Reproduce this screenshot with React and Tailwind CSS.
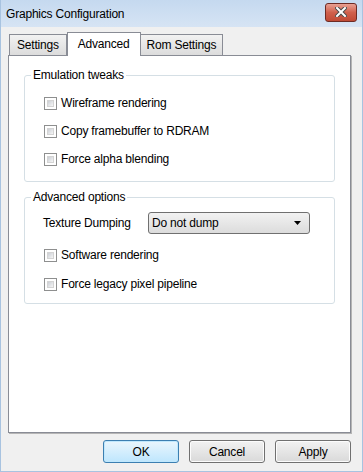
import React from "react";

const font = { fontFamily: '"Liberation Sans", Arial, sans-serif', letterSpacing: "-0.2px" };

function Check({ label }) {
  return (
    <label className="flex items-center gap-[4px] h-[14px] text-[12px] text-black">
      <span className="w-[13px] h-[13px] border border-[#8e8f8f] bg-white p-[2px] shrink-0">
        <span className="block w-full h-full bg-gradient-to-br from-[#cbcfd5] to-[#f6f6f6] border border-[#d4d4d4]" />
      </span>
      {label}
    </label>
  );
}

function Group({ title, className, children }) {
  return (
    <div className={`relative border border-[#d5dfe5] rounded-[3px] ${className}`}>
      <span className="absolute -top-[8px] left-[6px] bg-white px-[2px] text-[12px] leading-[14px] text-black">
        {title}
      </span>
      {children}
    </div>
  );
}

function Button({ children, primary }) {
  return (
    <button
      className={`w-[76px] h-[23px] rounded-[3px] border text-[12px] text-black ${
        primary
          ? "border-[#3c7fb1] bg-gradient-to-b from-[#eaf6fd] to-[#bee6fd] shadow-[inset_0_0_0_1px_#c0e8fd]"
          : "border-[#707070] bg-gradient-to-b from-[#f2f2f2] to-[#d9d9d9] shadow-[inset_0_0_0_1px_#fcfcfc]"
      }`}
    >
      {children}
    </button>
  );
}

export default function App() {
  return (
    <div style={font} className="w-[363px] h-[472px] flex flex-col bg-[#f0f0f0] border-x border-b border-[#a8c3e0] overflow-hidden">
      {/* Title bar */}
      <div className="h-[27px] shrink-0 flex items-center justify-between pl-[5px] pr-[5px] bg-gradient-to-b from-[#c5d9ef] to-[#d6e4f4]">
        <span className="text-[12px] text-black mt-[1px]">Graphics Configuration</span>
        <div className="w-[32px] h-[19px] -mt-[3px] rounded-[3px] border border-[#6d2b24] bg-gradient-to-b from-[#e8a093] via-[#d0604c] to-[#c04a35] flex items-center justify-center">
          <svg width="12" height="10" viewBox="0 0 12 10">
            <path d="M2 1 L10 9 M10 1 L2 9" stroke="#4a4a4a" strokeWidth="4" strokeLinecap="square" />
            <path d="M2 1 L10 9 M10 1 L2 9" stroke="#ffffff" strokeWidth="2" strokeLinecap="square" />
          </svg>
        </div>
      </div>

      {/* Tabs */}
      <div className="flex items-end pl-[8px] pt-[6px] h-[28px] shrink-0">
        <div className="h-[21px] px-[7px] flex items-center text-[12px] border border-b-0 border-[#898c95] bg-gradient-to-b from-[#f2f2f2] to-[#dcdcdc]">
          Settings
        </div>
        <div className="h-[24px] -mb-[1px] px-[10px] flex items-start pt-[2px] text-[12px] border border-b-0 border-[#898c95] bg-white relative z-10">
          Advanced
        </div>
        <div className="h-[21px] px-[6px] flex items-center text-[12px] border border-b-0 border-l-0 border-[#898c95] bg-gradient-to-b from-[#f2f2f2] to-[#dcdcdc]">
          Rom Settings
        </div>
      </div>

      {/* Panel */}
      <div className="mx-[7px] mr-[11px] h-[378px] bg-white border border-[#898c95] shadow-[1px_1px_0_#b5b5b5] flex flex-col px-[15px] pt-[19px]">
        <Group title="Emulation tweaks" className="h-[107px] flex flex-col gap-[14px] pl-[19px] pt-[20px]">
          <Check label="Wireframe rendering" />
          <Check label="Copy framebuffer to RDRAM" />
          <Check label="Force alpha blending" />
        </Group>

        <Group title="Advanced options" className="mt-[15px] h-[107px] flex flex-col pl-[18px] pt-[14px]">
          <div className="flex items-center h-[22px] text-[12px]">
            <span className="w-[105px]">Texture Dumping</span>
            <div className="w-[162px] h-[22px] rounded-[3px] border border-[#707070] bg-gradient-to-b from-[#f2f2f2] to-[#dcdcdc] flex items-center justify-between pl-[3px] pr-[7px]">
              <span>Do not dump</span>
              <svg width="8" height="4" viewBox="0 0 8 4">
                <path d="M0 0 H7 L3.5 4 Z" fill="#000" />
              </svg>
            </div>
          </div>
          <div className="mt-[14px] flex flex-col gap-[15px] pl-[1px]">
            <Check label="Software rendering" />
            <Check label="Force legacy pixel pipeline" />
          </div>
        </Group>
      </div>

      {/* Buttons */}
      <div className="flex justify-end gap-[10px] pr-[11px] pt-[7px]">
        <Button primary>OK</Button>
        <Button>Cancel</Button>
        <Button>Apply</Button>
      </div>
    </div>
  );
}
